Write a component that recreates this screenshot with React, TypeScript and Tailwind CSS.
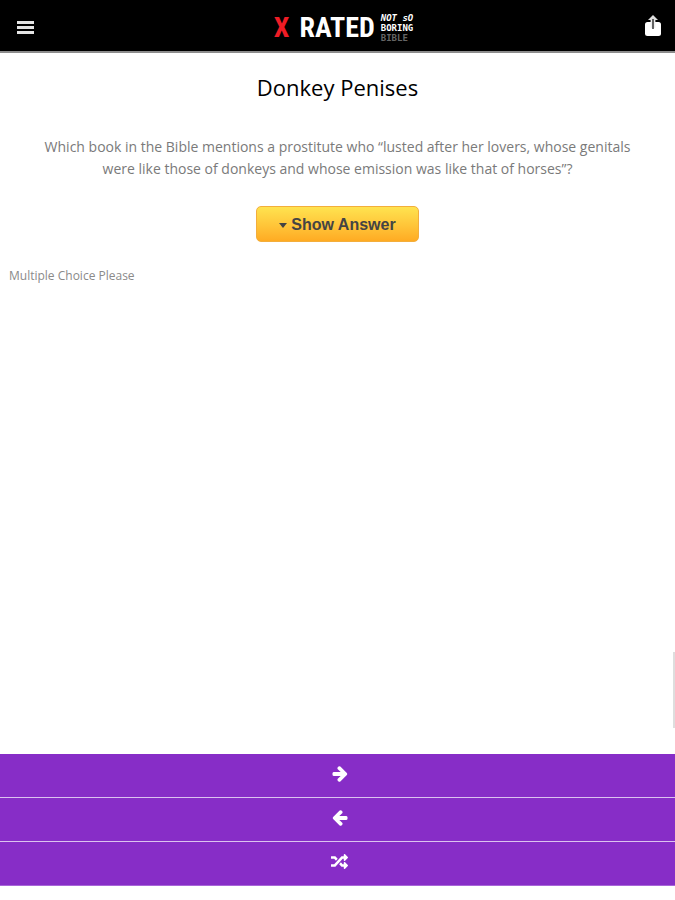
import React from "react";
import { FaRandom } from "react-icons/fa";

const ARROW =
  "M1472 960q0 54-37 91l-651 651q-39 37-91 37-51 0-90-37l-75-75q-38-38-38-91t38-91l293-293H117q-52 0-84.5-37.5T0 1024V896q0-53 32.5-90.5T117 768h704L528 474q-38-36-38-90t38-90l75-75q38-38 90-38 53 0 91 38l651 651q37 35 37 90z";

function Arrow({ className = "" }: { className?: string }) {
  return (
    <svg viewBox="0 160 1500 1600" className={`h-4 w-4 ${className}`} fill="currentColor" aria-hidden="true">
      <path d={ARROW} />
    </svg>
  );
}

function MenuIcon() {
  return (
    <svg viewBox="0 0 17 13" className="h-[13px] w-[17px]" fill="#e4e4e4" aria-hidden="true">
      <rect width="17" height="3" />
      <rect y="5" width="17" height="3" />
      <rect y="10" width="17" height="3" />
    </svg>
  );
}

function ShareIcon() {
  return (
    <svg viewBox="0 0 16 21" className="h-[21px] w-4" aria-hidden="true">
      <rect y="7" width="16" height="14" rx="2.5" fill="#fff" />
      <path d="M8 0 13 5H3Z" fill="#ddd" />
      <path d="M5.6 5h4.8v8H5.6Z" fill="#eee" />
      <path d="M8 4v10" stroke="#333" strokeWidth="1.5" />
    </svg>
  );
}

function NavRow({ label, children }: { label: string; children: React.ReactNode }) {
  return (
    <button
      type="button"
      aria-label={label}
      className="flex h-11 w-full items-center justify-center border-b border-[#dcc2f0] bg-[#872dc7] pb-1 pl-1 text-white last:border-b-[#a866d8]"
    >
      {children}
    </button>
  );
}

export default function App() {
  return (
    <div className="flex min-h-screen flex-col bg-white pb-3.5 font-['Open_Sans',sans-serif]">
      <header className="flex h-[53px] items-center justify-between border-b-2 border-[#8c8c8c] bg-black pr-3.5 pl-[17px]">
        <button type="button" aria-label="Menu" className="pt-1">
          <MenuIcon />
        </button>
        <div className="flex items-center gap-1.5 pt-1 pl-2 text-white">
          <span className="flex items-center gap-2.5 font-['Liberation_Sans_Narrow','Roboto_Condensed',Roboto,sans-serif] text-[28px] leading-8 font-bold">
            <span className="text-[#ee1c25]">X</span>
            <span>RATED</span>
          </span>
          <span className="flex flex-col font-['DejaVu_Sans_Mono',monospace] text-[9px] leading-[10px] font-bold">
            <span className="italic">NOT sO</span>
            <span>BORING</span>
            <span className="text-[#666]">BIBLE</span>
          </span>
        </div>
        <button type="button" aria-label="Share" className="pb-px">
          <ShareIcon />
        </button>
      </header>

      <main className="flex flex-1 flex-col">
        <div className="flex flex-col items-center px-10">
          <h1 className="pt-4 text-[22px] leading-9 text-black">Donkey Penises</h1>
          <p className="pt-[31px] text-center text-sm leading-[22px] text-[#7a7a7a]">
            Which book in the Bible mentions a prostitute who “lusted after her lovers, whose genitals were like those of
            donkeys and whose emission was like that of horses”?
          </p>
          <button
            type="button"
            className="mt-[26px] flex h-9 items-center gap-1 rounded-[5px] border border-[#f3ae3c] bg-linear-to-b from-[#ffe34f] to-[#ffab22] px-[22px] pt-0.5 font-['Liberation_Sans',Arial,sans-serif] text-base font-bold text-[#444]"
          >
            <svg viewBox="0 0 8 5" className="h-[5px] w-2" fill="currentColor" aria-hidden="true">
              <path d="M0 0h8L4 5z" />
            </svg>
            Show Answer
          </button>
        </div>
        <a href="#choices" className="mt-6 ml-[9px] self-start text-xs leading-5 text-[#8a8a8a]">
          Multiple Choice Please
        </a>
        <div className="mt-auto mb-[26px] h-[76px] w-0.5 self-end bg-[#dedede]" />
      </main>

      <nav>
        <NavRow label="Next question">
          <Arrow />
        </NavRow>
        <NavRow label="Previous question">
          <Arrow className="rotate-180" />
        </NavRow>
        <NavRow label="Random question">
          <FaRandom className="h-[17px] w-[17px]" />
        </NavRow>
      </nav>
    </div>
  );
}
